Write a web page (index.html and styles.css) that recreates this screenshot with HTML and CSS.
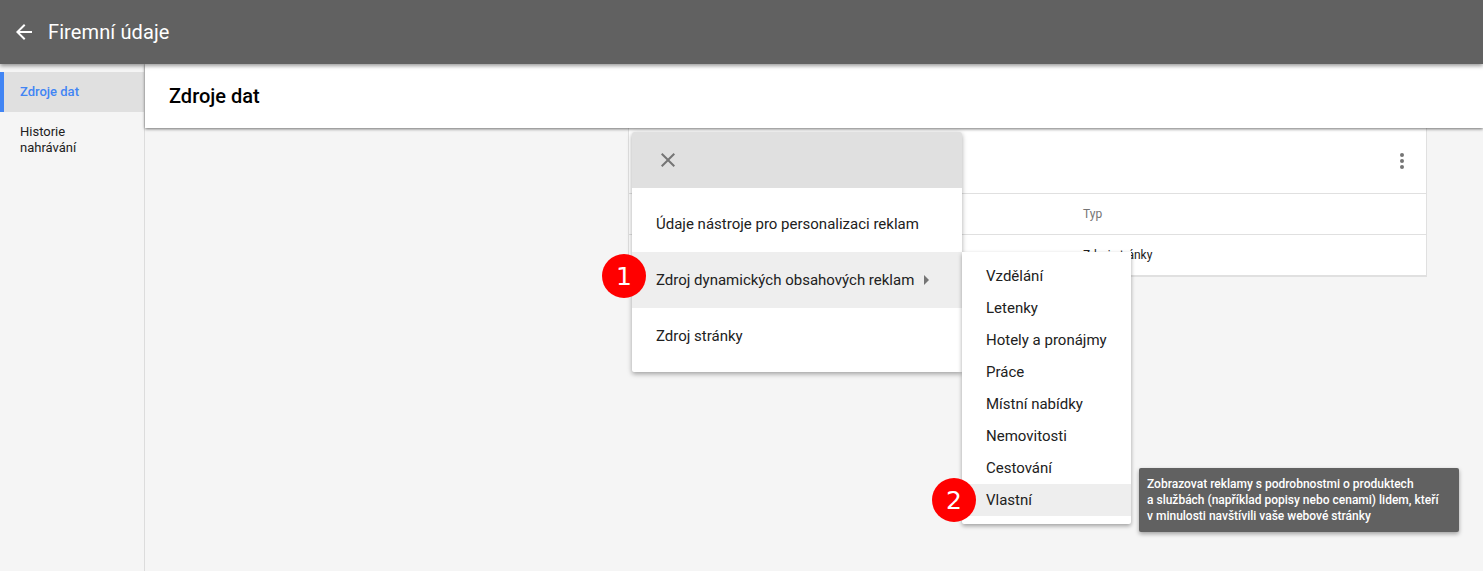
FILE: index.html
```html
<!DOCTYPE html>
<html lang="cs">
<head>
<meta charset="utf-8">
<title>Firemní údaje</title>
<link rel="stylesheet" href="styles.css">
</head>
<body>
<header class="topbar">
  <svg class="back" viewBox="0 0 24 24" width="24" height="24"><path d="M20 11H7.83l5.59-5.59L12 4l-8 8 8 8 1.41-1.41L7.83 13H20z" fill="#fff"/></svg>
  <h1 class="app-title">Firemní údaje</h1>
</header>
<div class="body-row">
  <nav class="sidebar">
    <a class="nav-item active">Zdroje dat</a>
    <a class="nav-item">Historie nahrávání</a>
  </nav>
  <main class="main">
    <div class="subheader">Zdroje dat</div>
    <section class="card">
      <div class="card-top">
        <svg class="more" viewBox="0 0 6 18" width="6" height="18"><circle cx="3" cy="3" r="2"/><circle cx="3" cy="9" r="2"/><circle cx="3" cy="15" r="2"/></svg>
      </div>
      <div class="row head"><span class="col-type">Typ</span></div>
      <div class="row"><span class="col-type">Zdroj stránky</span></div>
    </section>
  </main>
</div>

<div class="menu">
  <div class="menu-head">
    <svg class="close" viewBox="0 0 24 24" width="24" height="24"><path d="M19 6.41 17.59 5 12 10.59 6.41 5 5 6.41 10.59 12 5 17.59 6.41 19 12 13.41 17.59 19 19 17.59 13.41 12z" fill="#757575"/></svg>
  </div>
  <div class="menu-list">
    <div class="menu-item">Údaje nástroje pro personalizaci reklam</div>
    <div class="menu-item hover">Zdroj dynamických obsahových reklam<span class="caret"></span></div>
    <div class="menu-item">Zdroj stránky</div>
  </div>
</div>

<div class="submenu">
  <div class="sub-item">Vzdělání</div>
  <div class="sub-item">Letenky</div>
  <div class="sub-item">Hotely a pronájmy</div>
  <div class="sub-item">Práce</div>
  <div class="sub-item">Místní nabídky</div>
  <div class="sub-item">Nemovitosti</div>
  <div class="sub-item">Cestování</div>
  <div class="sub-item hover">Vlastní</div>
</div>

<div class="tooltip">Zobrazovat reklamy s podrobnostmi o produktech<br>a službách (například popisy nebo cenami) lidem, kteří<br>v minulosti navštívili vaše webové stránky</div>

<div class="badge badge-one">1</div>
<div class="badge badge-two">2</div>
</body>
</html>
```
FILE: styles.css
```css
* { box-sizing: border-box; }
html, body { height: 100%; }
body {
  margin: 0;
  height: 571px;
  overflow: hidden;
  background: #f5f5f5;
  font-family: Roboto, "Liberation Sans", sans-serif;
  color: #212121;
  position: relative;
  display: flex;
  flex-direction: column;
}
.topbar {
  height: 64px;
  flex: none;
  background: #616161;
  display: flex;
  align-items: center;
  padding-left: 12px;
  gap: 12px;
  box-shadow: 0 2px 4px rgba(0,0,0,.4);
  position: relative;
  z-index: 3;
}
.app-title {
  margin: 0;
  font-size: 20px;
  font-weight: 400;
  color: #fff;
  letter-spacing: .1px;
}
.body-row { flex: 1; display: flex; min-height: 0; }
.sidebar {
  width: 145px;
  flex: none;
  border-right: 1px solid #dcdcdc;
  padding-top: 8px;
}
.nav-item {
  display: block;
  padding: 12px 20px;
  font-size: 13px;
  line-height: 16px;
  font-weight: 400;
  color: #212121;
  height: 40px;
}
.nav-item + .nav-item { height: auto; padding-right: 40px; }
.nav-item.active {
  background: #e0e0e0;
  color: #4285f4;
  font-weight: 500;
  border-left: 4px solid #4285f4;
  padding-left: 16px;
}
.main { flex: 1; min-width: 0; }
.subheader {
  height: 64px;
  background: #fff;
  padding: 0 24px;
  display: flex;
  align-items: center;
  font-size: 20px;
  font-weight: 500;
  color: #000;
  box-shadow: 0 1px 3px rgba(0,0,0,.55);
  position: relative;
  z-index: 1;
}
.card {
  margin-left: 483px;
  width: 799px;
  background: #fff;
  border: 1px solid #e0e0e0;
  border-top: 0;
}
.card-top {
  height: 66px;
  display: flex;
  justify-content: flex-end;
  align-items: center;
  padding: 0 21px 0 0;
  border-bottom: 1px solid #e0e0e0;
}
.more { fill: #757575; }
.row {
  height: 41px;
  display: flex;
  align-items: center;
  padding-left: 454px;
  font-size: 12px;
  border-bottom: 1px solid #e0e0e0;
}
.row.head { color: #757575; }
.menu {
  position: absolute;
  left: 632px;
  top: 132px;
  width: 330px;
  height: 240px;
  background: #fff;
  border-radius: 2px 2px 0 2px;
  box-shadow: 0 2px 5px rgba(0,0,0,.35);
  z-index: 4;
}
.menu-head {
  height: 56px;
  background: #e0e0e0;
  border-radius: 2px 2px 0 0;
  display: flex;
  align-items: center;
  padding-left: 24px;
}
.menu-list { padding-top: 8px; }
.menu-item {
  height: 56px;
  padding-left: 24px;
  display: flex;
  align-items: center;
  font-size: 15px;
  color: #212121;
}
.hover { background: #eee; }
.caret {
  width: 0;
  height: 0;
  margin-left: 10px;
  border-left: 5px solid #757575;
  border-top: 5px solid transparent;
  border-bottom: 5px solid transparent;
}
.submenu {
  position: absolute;
  left: 962px;
  top: 252px;
  width: 169px;
  height: 272px;
  padding-top: 8px;
  background: #fff;
  border-radius: 0 0 2px 2px;
  box-shadow: 0 2px 4px rgba(0,0,0,.35);
  z-index: 5;
}
.sub-item {
  height: 32px;
  padding-left: 24px;
  display: flex;
  align-items: center;
  font-size: 15px;
  color: #212121;
}
.tooltip {
  position: absolute;
  left: 1139px;
  top: 468px;
  width: 320px;
  height: 64px;
  padding: 8px;
  background: #616161;
  border-radius: 2px;
  box-shadow: 0 2px 4px rgba(0,0,0,.35);
  color: #fff;
  font-size: 12px;
  line-height: 16px;
  font-weight: 500;
  white-space: nowrap;
  z-index: 5;
}
.badge {
  position: absolute;
  width: 44px;
  height: 44px;
  border-radius: 50%;
  background: #f00;
  color: #fff;
  font-family: "DejaVu Sans", sans-serif;
  font-size: 25px;
  display: flex;
  align-items: center;
  justify-content: center;
  z-index: 6;
}
.badge-one { left: 602px; top: 254px; }
.badge-two { left: 932px; top: 478px; }
```
